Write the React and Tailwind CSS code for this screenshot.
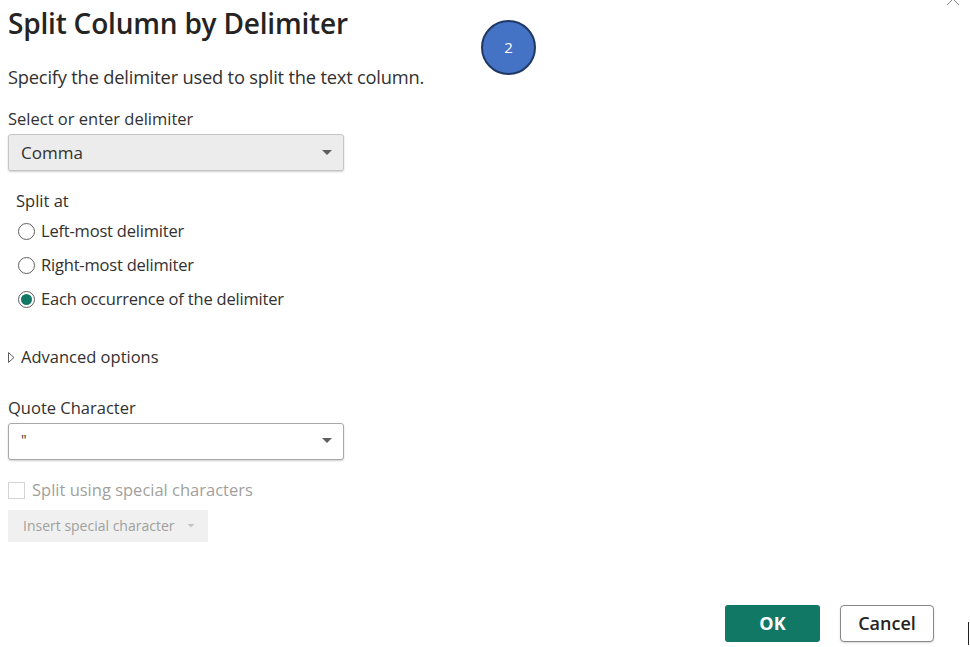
import React from "react";

const Caret = ({ className = "" }) => (
  <svg width="10" height="6" viewBox="0 0 10 6" className={className}>
    <path d="M0 0 L10 0 L5 5 Z" fill="currentColor" />
  </svg>
);

const Radio = ({ checked, label }) => (
  <div className="flex items-center h-[34px] gap-[6px]">
    <span className="w-[17px] h-[17px] rounded-full border border-[#616161] flex items-center justify-center bg-white">
      {checked && <span className="w-[11px] h-[11px] rounded-full bg-[#117865]" />}
    </span>
    <span className="text-[16.5px] text-[#323130] tracking-[-0.2px]">{label}</span>
  </div>
);

export default function App() {
  return (
    <div
      className="relative w-[970px] h-[647px] bg-white overflow-hidden text-[#252423]"
      style={{ fontFamily: '"Open Sans", "Noto Sans", sans-serif' }}
    >
      <div className="flex flex-col px-2 pt-[3px]">
        <h1 className="text-[28px] font-semibold leading-[40px] tracking-[-0.2px] text-[#252423]">
          Split Column by Delimiter
        </h1>
        <p className="mt-[21px] text-[18.3px] leading-[26px] text-[#323130] tracking-[-0.2px]">
          Specify the delimiter used to split the text column.
        </p>
        <label className="mt-[18px] text-[16.5px] leading-[22px] text-[#323130]">
          Select or enter delimiter
        </label>
        <div className="mt-[4px] w-[336px] h-[37px] bg-[#ececec] border border-[#c6c6c6] rounded-[3px] shadow-[0_1px_2px_rgba(0,0,0,0.2)] flex items-center justify-between pl-[12px] pr-[11px]">
          <span className="text-[17px] text-[#323130]">Comma</span>
          <Caret className="text-[#605e5c]" />
        </div>
        <div className="mt-[18px] pl-[8px] text-[16.5px] leading-[24px] text-[#323130]">Split at</div>
        <div className="flex flex-col pl-[10px] mt-[1px]">
          <Radio label="Left-most delimiter" />
          <Radio label="Right-most delimiter" />
          <Radio checked label="Each occurrence of the delimiter" />
        </div>
        <div className="mt-[29px] flex items-center gap-[6px]">
          <svg width="7" height="11" viewBox="0 0 7 11">
            <path d="M0.5 0.5 L6 5.5 L0.5 10.5 Z" fill="none" stroke="#605e5c" strokeWidth="1" />
          </svg>
          <span className="text-[16.5px] text-[#323130]">Advanced options</span>
        </div>
        <label className="mt-[26px] text-[16.5px] leading-[24px] text-[#323130]">Quote Character</label>
        <div className="mt-[3px] w-[336px] h-[37px] bg-white border border-[#a8a8a8] rounded-[3px] shadow-[0_1px_2px_rgba(0,0,0,0.2)] flex items-center justify-between pl-[12px] pr-[11px]">
          <span className="text-[14px] text-[#323130] -mt-[4px]">"</span>
          <Caret className="text-[#605e5c]" />
        </div>
        <div className="mt-[18px] flex items-center gap-[7px]">
          <span className="w-[17px] h-[17px] border border-[#d4d4d4] bg-white" />
          <span className="text-[16.5px] text-[#a19f9d]">Split using special characters</span>
        </div>
        <div className="mt-[7px] w-[200px] h-[32px] bg-[#f0f0f0] flex items-center pl-[15px] gap-[11px]">
          <span className="text-[14px] text-[#a19f9d]">Insert special character</span>
          <Caret className="text-[#c8c6c4] scale-75" />
        </div>
      </div>

      <div className="absolute left-[725px] top-[605px] flex gap-[20px]">
        <button className="w-[95px] h-[37px] rounded-[3px] bg-[#117865] text-white font-bold text-[18px]">
          OK
        </button>
        <button className="w-[94px] h-[37px] rounded-[4px] bg-white border border-[#8a8886] shadow-[0_1px_2px_rgba(0,0,0,0.15)] text-[#252423] font-semibold text-[18px]">
          Cancel
        </button>
      </div>

      <div className="absolute left-[968px] top-[622px] w-px h-[23px] bg-[#222]" />

      <svg className="absolute left-[946px] top-[-8px]" width="16" height="14" viewBox="0 0 16 14">
        <path d="M1 1 L13 13 M13 1 L1 13" stroke="#8a8886" strokeWidth="1" />
      </svg>

      <div className="absolute left-[481px] top-[20px] w-[55px] h-[55px] rounded-full bg-[#4472c4] border-2 border-[#1f3864] flex items-center justify-center text-white text-[15px]">
        2
      </div>
    </div>
  );
}
